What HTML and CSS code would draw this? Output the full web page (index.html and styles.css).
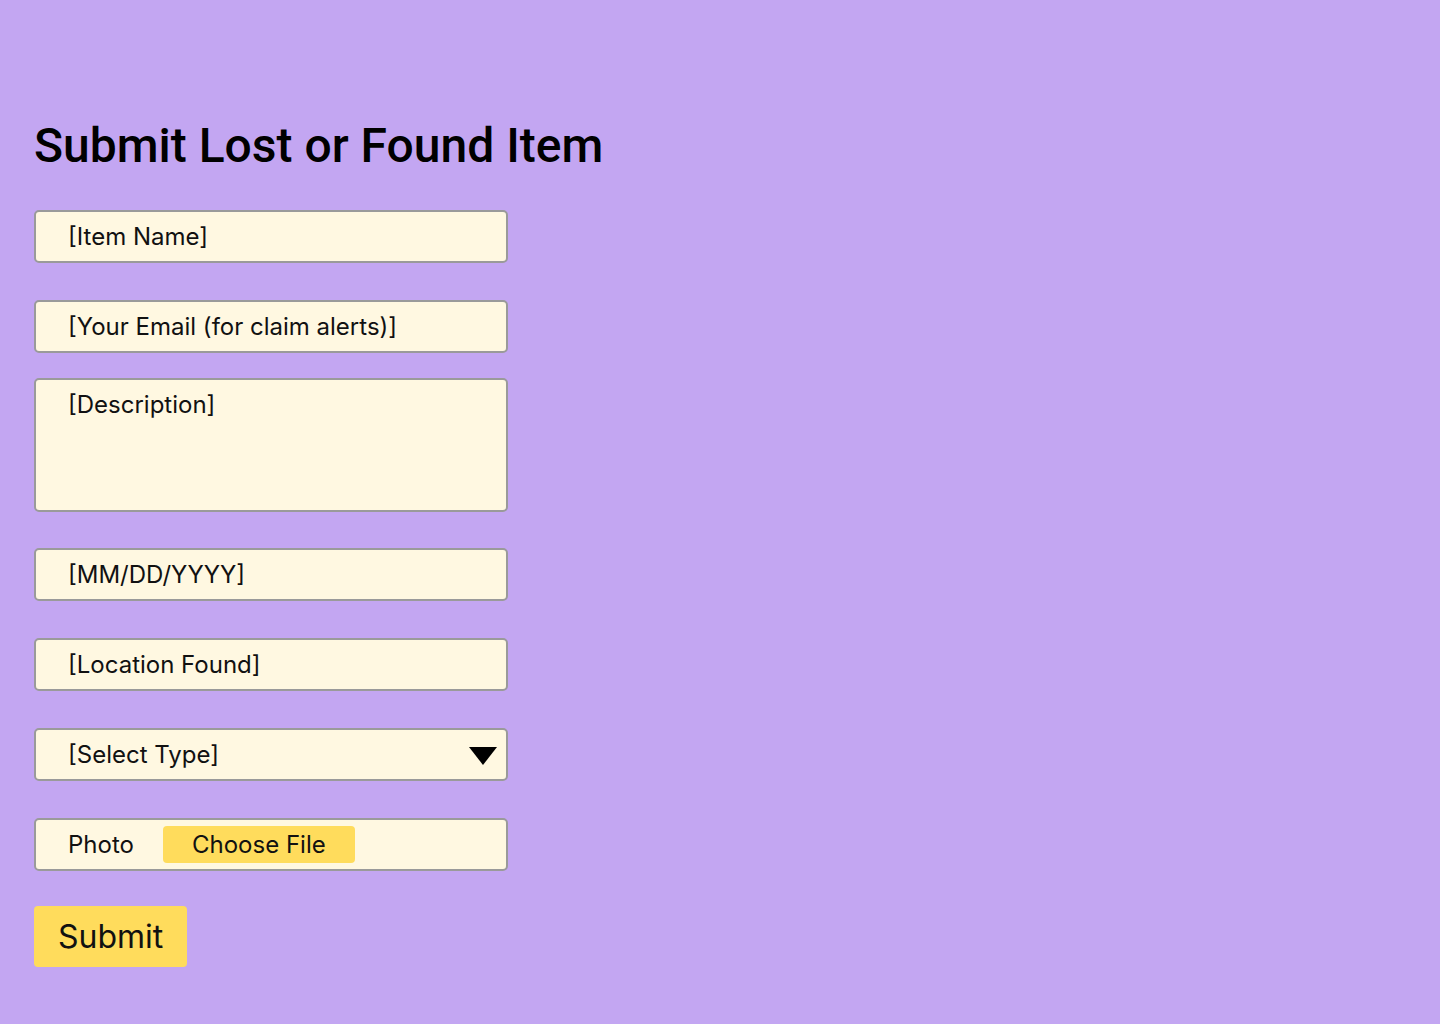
FILE: index.html
```html
<!DOCTYPE html>
<html lang="en">
<head>
    <meta charset="UTF-8">
    <meta name="viewport" content="width=device-width, initial-scale=1.0">
    <title>Submit Lost or Found Item</title>
    <link rel="stylesheet" href="styles.css">
</head>
<body>
    <div class="container">
        <h1>Submit Lost or Found Item</h1>

        <form class="item-form" onsubmit="return false">
            <input class="field" type="text" placeholder="[Item Name]">
            <input class="field field-tight" type="email" placeholder="[Your Email (for claim alerts)]">
            <textarea class="field field-area" placeholder="[Description]"></textarea>
            <input class="field" type="text" placeholder="[MM/DD/YYYY]">
            <input class="field" type="text" placeholder="[Location Found]">

            <!-- tipo: perdido / achado -->
            <div class="select-wrap">
                <select class="field field-select">
                    <option>[Select Type]</option>
                    <option>Lost</option>
                    <option>Found</option>
                </select>
                <svg class="select-arrow" width="28" height="18" viewBox="0 0 28 18">
                    <polygon points="0,0 28,0 14,18" fill="#000"/>
                </svg>
            </div>

            <label class="field field-photo">
                <span class="photo-label">Photo</span>
                <span class="file-button">Choose File</span>
                <input class="file-input" type="file" accept="image/*">
            </label>

            <button class="submit-button" type="submit">Submit</button>
        </form>
    </div>
</body>
</html>
```

FILE: styles.css
```css
/* Estilos gerais */
body {
    margin: 0;
    padding: 0;
    min-height: 100vh;
    background-color: #c3a6f2;
    font-family: Inter, "Noto Sans", sans-serif;
    color: #111;
}

.container {
    padding: 117px 34px 40px;
}

h1 {
    margin: 0 0 35px;
    font-family: Roboto, Inter, sans-serif;
    font-size: 48px;
    line-height: 58px;
    font-weight: 500;
    color: #000;
}

.item-form {
    display: flex;
    flex-direction: column;
    align-items: flex-start;
    width: 474px;
}

.field {
    box-sizing: border-box;
    width: 100%;
    height: 53px;
    margin: 0 0 37px;
    padding: 0 32px;
    border: 2px solid #9a9a9a;
    border-radius: 5px;
    background: #fff8e1;
    font-family: inherit;
    font-size: 24px;
    color: #111;
    outline: none;
}

.field::placeholder {
    color: #111;
    opacity: 1;
}

.field-tight {
    margin-bottom: 25px;
}

.field-area {
    height: 134px;
    margin-bottom: 36px;
    padding-top: 11px;
    resize: none;
    line-height: 1.2;
}

.select-wrap {
    position: relative;
    width: 100%;
    margin-bottom: 37px;
}

.field-select {
    margin: 0;
    appearance: none;
    -webkit-appearance: none;
    cursor: pointer;
}

.select-arrow {
    position: absolute;
    right: 11px;
    top: 19px;
    pointer-events: none;
}

.field-photo {
    display: flex;
    align-items: center;
    margin-bottom: 35px;
    cursor: pointer;
}

.photo-label {
    width: 95px;
}

.file-button {
    height: 37px;
    padding: 0 29px;
    display: flex;
    align-items: center;
    border-radius: 4px;
    background: #ffdc5c;
}

.file-input {
    display: none;
}

.submit-button {
    height: 61px;
    padding: 0 24px;
    border: none;
    border-radius: 4px;
    background: #ffdc5c;
    font-family: inherit;
    font-size: 32px;
    color: #111;
    cursor: pointer;
}

.submit-button:hover {
    background: #ffd23a;
}
```
